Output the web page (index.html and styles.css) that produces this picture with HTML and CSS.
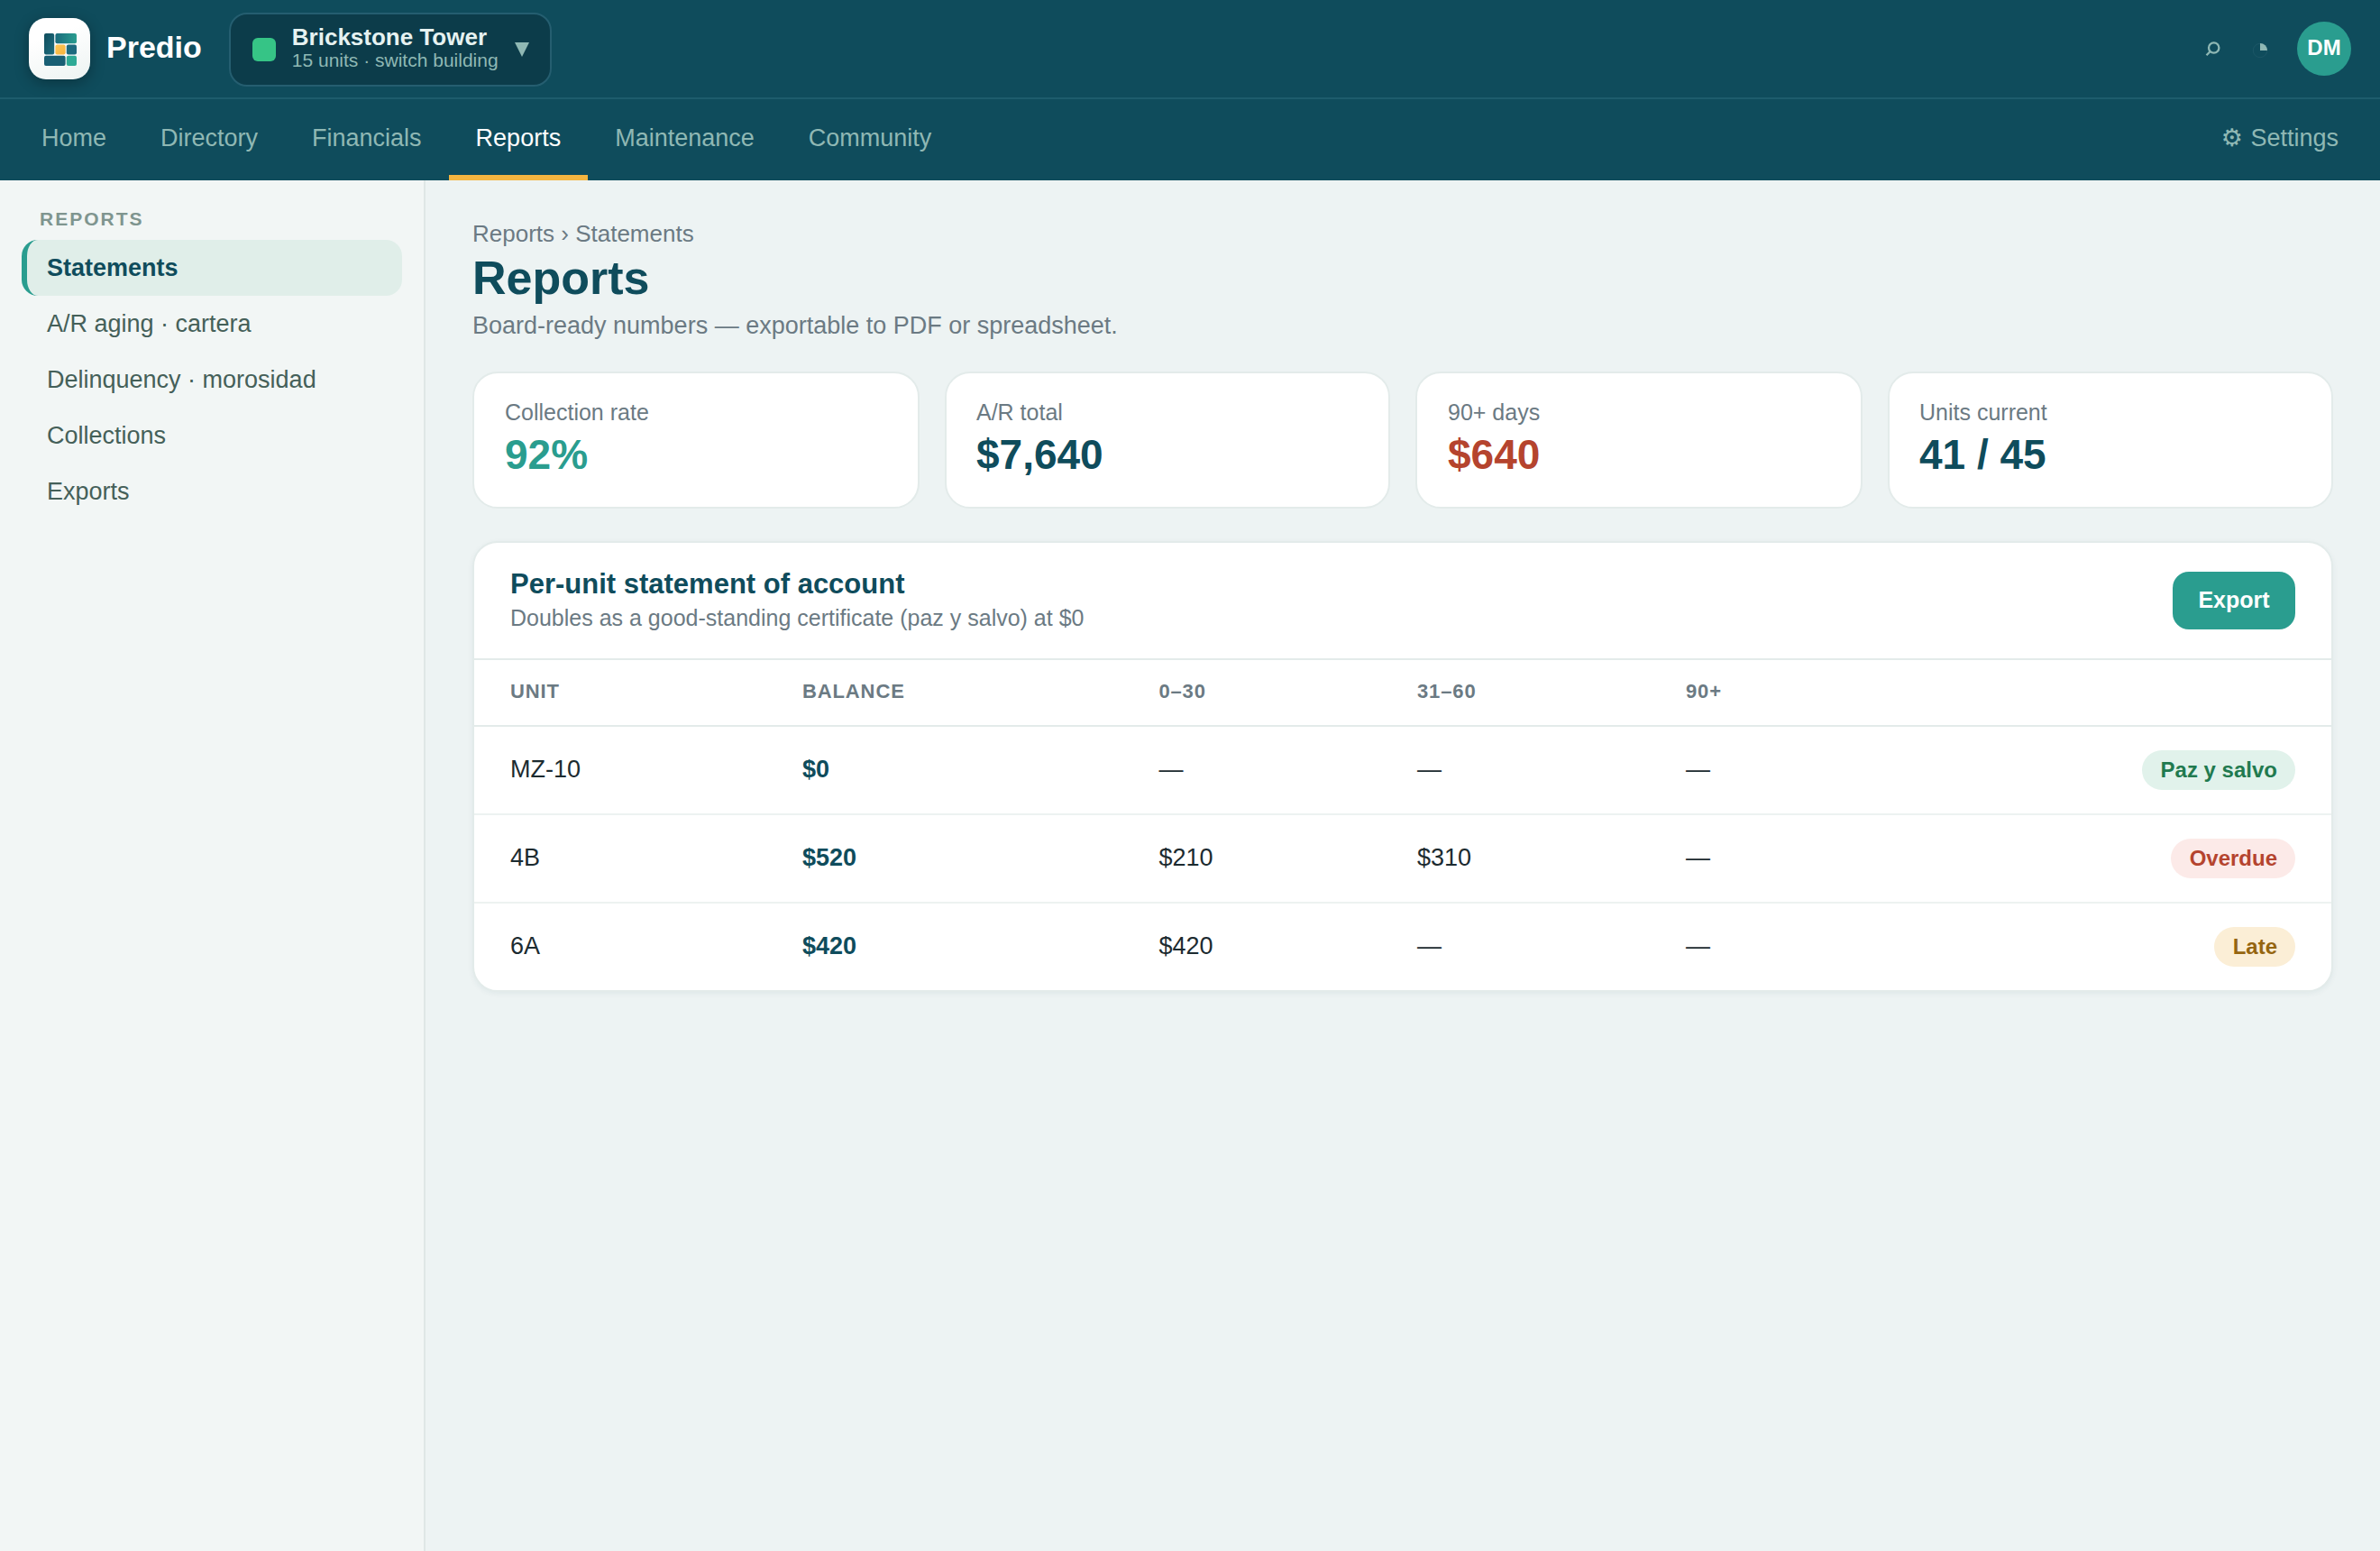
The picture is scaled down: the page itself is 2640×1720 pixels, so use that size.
FILE: index.html
```html
<!DOCTYPE html>
<html lang="en">
<head>
<meta charset="utf-8">
<title>Predio · Reports</title>
<link rel="stylesheet" href="styles.css">
</head>
<body>
<header class="topbar">
  <div class="brand">
    <div class="logo">
      <svg width="36" height="36" viewBox="0 0 36 36">
        <defs>
          <linearGradient id="deep" x1="0" y1="0" x2="1" y2="1"><stop offset="0" stop-color="#0f4c5c"/><stop offset="1" stop-color="#1f6f80"/></linearGradient>
          <linearGradient id="sea" x1="0" y1="0" x2="1" y2="0"><stop offset="0" stop-color="#1a6b7c"/><stop offset="1" stop-color="#2a9d8f"/></linearGradient>
          <linearGradient id="sun" x1="0" y1="0" x2="1" y2="1"><stop offset="0" stop-color="#ffc857"/><stop offset="1" stop-color="#f4b23c"/></linearGradient>
        </defs>
        <rect x="0" y="0" width="11.2" height="23.5" rx="2" fill="url(#deep)"/>
        <rect x="12.4" y="0" width="23.6" height="11.2" rx="2" fill="url(#sea)"/>
        <rect x="12.4" y="12.4" width="11.2" height="11.1" rx="2" fill="url(#sun)"/>
        <rect x="24.8" y="12.4" width="11.2" height="11.1" rx="2" fill="#1d6a7e"/>
        <rect x="0" y="24.8" width="23.6" height="11.2" rx="2" fill="#195f74"/>
        <rect x="24.8" y="24.8" width="11.2" height="11.2" rx="2" fill="#2eaa96"/>
      </svg>
    </div>
    <span class="brand-name">Predio</span>
  </div>
  <div class="switcher">
    <span class="swatch"></span>
    <div class="switcher-text">
      <div class="switcher-name">Brickstone Tower</div>
      <div class="switcher-sub">15 units · switch building</div>
    </div>
    <svg class="caret" width="16" height="16" viewBox="0 0 16 16"><path d="M0 0h16L8 16z" fill="#8fb8b4"/></svg>
  </div>
  <div class="tools">
    <svg class="tool" width="20" height="20" viewBox="0 0 20 20" fill="none" stroke="#8fb8b4" stroke-width="2.3"><circle cx="11.7" cy="9" r="5.7"/><path d="M7.7 13l-4.2 4.2"/></svg>
    <svg class="tool" width="20" height="20" viewBox="0 0 20 20"><circle cx="11" cy="12" r="7.7" fill="none" stroke="#2a6170" stroke-width="0.5"/><path d="M11 12V4a8 8 0 0 1 8 8z" fill="#8fb8b4"/></svg>
    <span class="avatar">DM</span>
  </div>
</header>
<nav class="nav">
  <a class="tab">Home</a>
  <a class="tab">Directory</a>
  <a class="tab">Financials</a>
  <a class="tab active">Reports</a>
  <a class="tab">Maintenance</a>
  <a class="tab">Community</a>
  <a class="tab settings">⚙ Settings</a>
</nav>
<div class="body">
  <aside class="sidebar">
    <div class="side-title">REPORTS</div>
    <a class="side-item current">Statements</a>
    <a class="side-item">A/R aging · cartera</a>
    <a class="side-item">Delinquency · morosidad</a>
    <a class="side-item">Collections</a>
    <a class="side-item">Exports</a>
  </aside>
  <main class="main">
    <div class="crumbs">Reports › Statements</div>
    <h1 class="title">Reports</h1>
    <p class="subtitle">Board-ready numbers — exportable to PDF or spreadsheet.</p>
    <section class="stats">
      <div class="stat"><div class="stat-label">Collection rate</div><div class="stat-value good">92%</div></div>
      <div class="stat"><div class="stat-label">A/R total</div><div class="stat-value">$7,640</div></div>
      <div class="stat"><div class="stat-label">90+ days</div><div class="stat-value bad">$640</div></div>
      <div class="stat"><div class="stat-label">Units current</div><div class="stat-value">41 / 45</div></div>
    </section>
    <section class="panel">
      <div class="panel-head">
        <div>
          <h2 class="panel-title">Per-unit statement of account</h2>
          <div class="panel-sub">Doubles as a good-standing certificate (paz y salvo) at $0</div>
        </div>
        <button class="export">Export</button>
      </div>
      <table class="table">
        <colgroup><col class="c-unit"><col class="c-balance"><col class="c-30"><col class="c-60"><col></colgroup>
        <thead>
          <tr><th>UNIT</th><th>BALANCE</th><th>0–30</th><th>31–60</th><th>90+</th><th></th></tr>
        </thead>
        <tbody>
          <tr><td>MZ-10</td><td class="balance">$0</td><td>—</td><td>—</td><td>—</td><td class="status"><span class="badge ok">Paz y salvo</span></td></tr>
          <tr><td>4B</td><td class="balance">$520</td><td>$210</td><td>$310</td><td>—</td><td class="status"><span class="badge overdue">Overdue</span></td></tr>
          <tr><td>6A</td><td class="balance">$420</td><td>$420</td><td>—</td><td>—</td><td class="status"><span class="badge late">Late</span></td></tr>
        </tbody>
      </table>
    </section>
  </main>
</div>
</body>
</html>
```
FILE: styles.css
```css
* { box-sizing: border-box; }
body {
  margin: 0;
  height: 1720px;
  display: flex;
  flex-direction: column;
  background: #edf3f3;
  color: #1c2b30;
  font-family: "Liberation Sans", Arial, "DejaVu Sans", sans-serif;
  font-size: 27px;
}
.topbar {
  height: 110px;
  padding: 0 32px;
  display: flex;
  align-items: center;
  background: #0f4c5c;
  border-bottom: 2px solid #1e5c6c;
}
.brand { display: flex; align-items: center; gap: 18px; }
.logo {
  width: 68px;
  height: 68px;
  padding: 2px 0 0 2px;
  display: flex;
  align-items: center;
  justify-content: center;
  border-radius: 19px;
  background: linear-gradient(160deg, #ffffff 30%, #edf3f2);
  box-shadow: 0 4px 16px rgba(0, 0, 0, 0.3);
}
.brand-name { font-size: 34px; font-weight: 700; color: #fff; padding-bottom: 4px; }
.switcher {
  width: 358px;
  height: 82px;
  margin: 2px 0 0 30px;
  padding: 0 23px 0 24px;
  display: flex;
  align-items: center;
  background: #0c3c4a;
  border: 2px solid #255e70;
  border-radius: 20px;
}
.swatch { width: 26px; height: 26px; border-radius: 6px; background: #36c486; }
.switcher-text { margin-left: 18px; padding-bottom: 4px; }
.switcher-name { font-size: 26px; line-height: 28px; font-weight: 700; color: #e6f2f1; }
.switcher-sub { font-size: 21px; line-height: 24px; color: #8fb8b4; }
.caret { display: block; margin-left: auto; }
.tools { margin-left: auto; display: flex; align-items: center; gap: 32px; }
.tool { display: block; }
.avatar {
  width: 60px;
  height: 60px;
  border-radius: 50%;
  background: #2a9d8f;
  color: #fff;
  font-size: 24px;
  font-weight: 700;
  line-height: 57px;
  text-align: center;
}
.nav { height: 90px; padding: 0 16px; display: flex; background: #0f4c5c; }
.tab { padding: 2px 30px 0; line-height: 82px; color: #8fb8b4; border-bottom: 6px solid transparent; }
.tab.active { color: #fff; border-bottom-color: #f4b540; }
.settings { margin-left: auto; word-spacing: 1px; }
.body { flex: 1; display: flex; }
.sidebar { width: 472px; padding: 30px 24px; background: #f2f6f5; border-right: 2px solid #dfe7e6; }
.side-title {
  padding-left: 20px;
  height: 36px;
  line-height: 25px;
  font-size: 21px;
  font-weight: 700;
  letter-spacing: 2px;
  color: #7f958f;
}
.side-item {
  display: block;
  padding-left: 22px;
  line-height: 62px;
  border-left: 6px solid transparent;
  border-radius: 18px;
  color: #456059;
}
.side-item.current { background: #e0eee9; border-left-color: #2a9d8f; color: #0f4c5c; font-weight: 700; }
.main { flex: 1; padding: 44px 52px; }
.crumbs { font-size: 26px; line-height: 30px; color: #6b7a83; }
.title { margin: 4px 0 0; font-size: 52px; line-height: 60px; font-weight: 700; color: #0f4c5c; }
.subtitle { margin: 8px 0 0; line-height: 31px; color: #6b7a83; }
.stats { margin-top: 35px; display: grid; grid-template-columns: 496px 494px 496px 494px; gap: 28px; }
.stat { height: 152px; padding: 29px 34px; background: #fff; border: 2px solid #e3ebea; border-radius: 28px; }
.stat:nth-child(even) { padding-left: 33px; }
.stat-label { font-size: 25px; line-height: 29px; color: #6b7a83; }
.stat-value { margin-top: 6px; font-size: 46px; line-height: 52px; font-weight: 700; color: #0f4c5c; }
.stat-value.good { color: #2a9d8f; }
.stat-value.bad { color: #b5442e; }
.panel {
  margin-top: 36px;
  background: #fff;
  border: 2px solid #e3ebea;
  border-radius: 28px;
  box-shadow: 0 2px 6px rgba(15, 76, 92, 0.06);
  overflow: hidden;
}
.panel-head {
  height: 130px;
  padding: 0 40px;
  display: flex;
  align-items: center;
  justify-content: space-between;
  border-bottom: 2px solid #e3ebea;
}
.panel-title { margin: 0; font-size: 31px; line-height: 36px; font-weight: 700; color: #0f4c5c; }
.panel-sub { margin: 5px 0 3px; font-size: 25px; line-height: 29px; color: #6b7a83; }
.export {
  width: 136px;
  height: 64px;
  padding: 0 0 2px;
  border: 0;
  border-radius: 18px;
  background: #2a9d8f;
  color: #fff;
  font: 700 25px "Liberation Sans", Arial, sans-serif;
}
.table { width: 100%; table-layout: fixed; border-collapse: separate; border-spacing: 0; }
.c-unit { width: 324px; }
.c-balance { width: 396px; }
.c-30 { width: 286px; }
.c-60 { width: 298px; }
th { height: 74px; padding: 0 0 3px 40px; text-align: left; font-size: 22px; letter-spacing: 0.04em; color: #6b7a83; border-bottom: 2px solid #e3ebea; }
td { height: 98px; padding: 0 0 2px 40px; border-bottom: 2px solid #edf2f1; }
th:nth-child(3), td:nth-child(3) { padding-left: 39.4px; }
tr:last-child td { height: 96px; border-bottom: 0; }
.balance { font-weight: 700; color: #0f4c5c; }
td.status { padding: 0 40px 0 0; text-align: right; }
.badge { display: inline-block; padding: 0 20px 0 20.6px; line-height: 44px; border-radius: 22px; font-size: 24px; font-weight: 700; vertical-align: middle; }
.ok { background: #e1f2eb; color: #217a4f; }
.overdue { background: #fceae8; color: #b5442e; }
.late { background: #fbeed6; color: #95650f; }
```
